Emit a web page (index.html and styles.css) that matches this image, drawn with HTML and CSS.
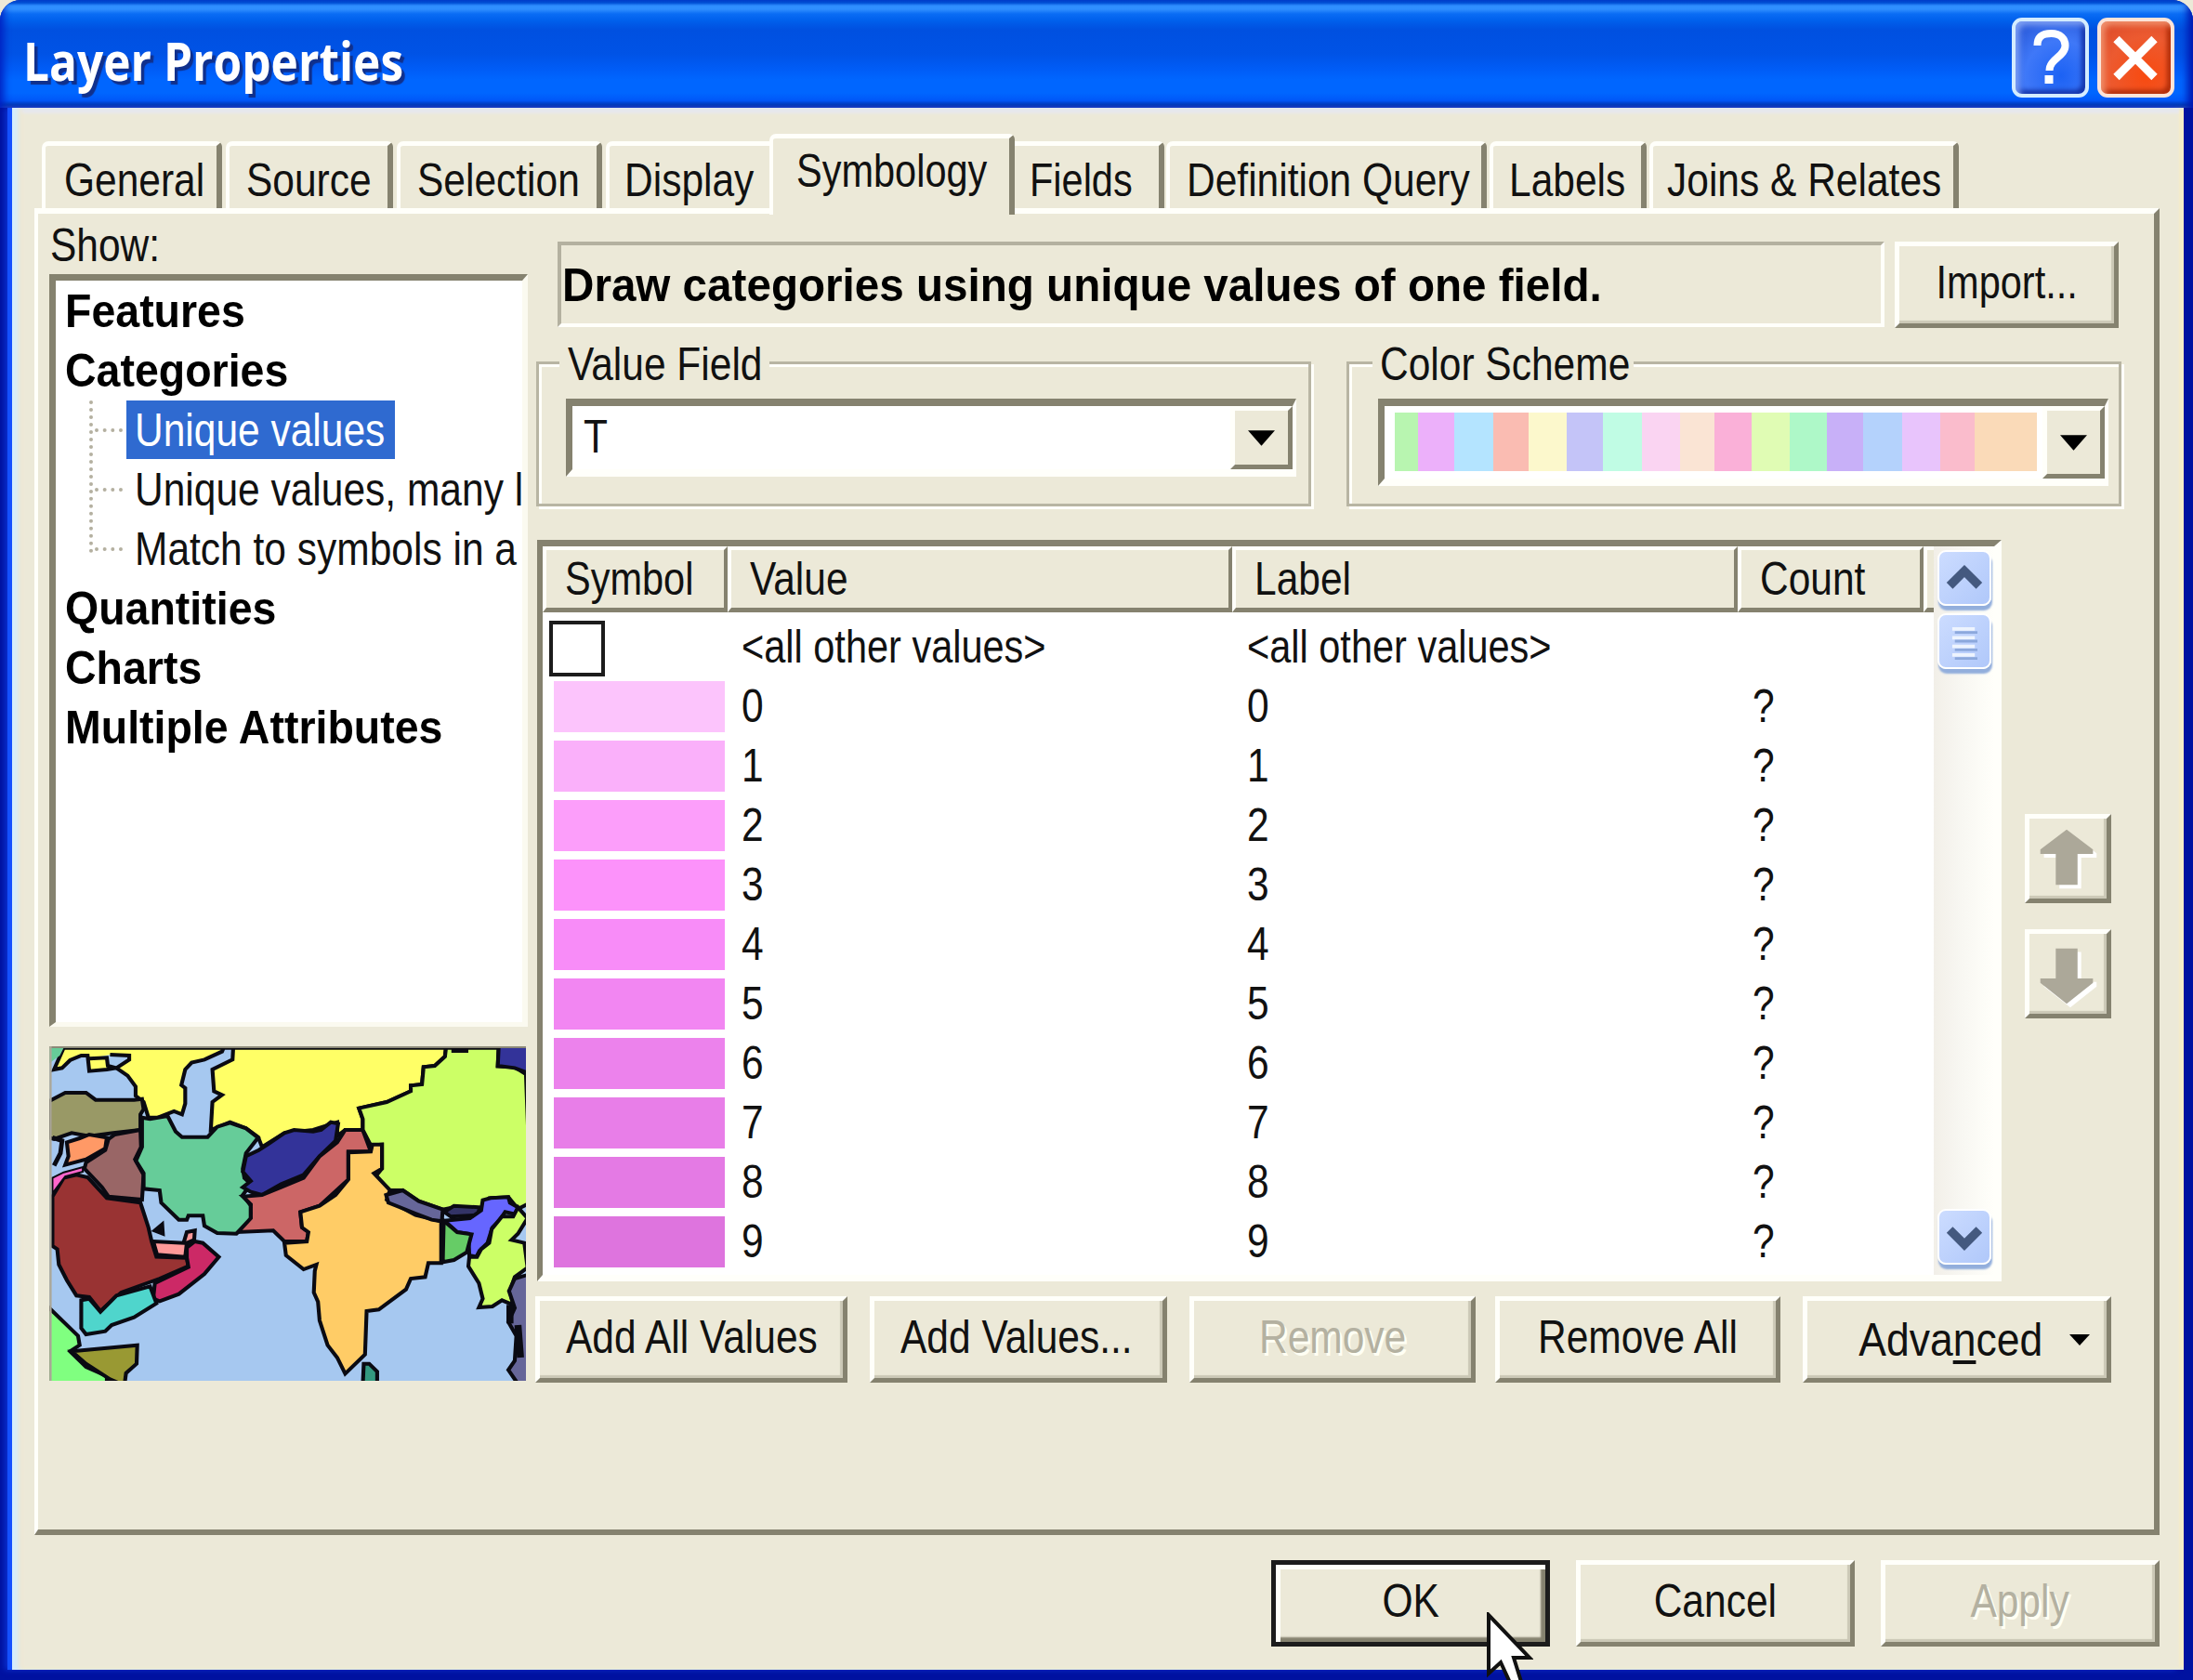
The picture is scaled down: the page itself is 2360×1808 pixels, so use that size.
FILE: index.html
```html
<!DOCTYPE html>
<html lang="en">
<head>
<meta charset="utf-8">
<title>Layer Properties</title>
<link rel="stylesheet" href="styles.css">
</head>
<body>
<div class="window">
  <header class="titlebar">
    <h1 class="title">Layer Properties</h1>
    <div class="caption-buttons">
      <button class="caption help" aria-label="Help">
        <svg viewBox="0 0 82 86"><path d="M27 30C27 20 33 17 42 17c10 0 15 6 15 13 0 12-17 14-17 27" fill="none" stroke="#fff" stroke-width="8"/><rect x="35" y="62" width="9" height="9" fill="#fff"/></svg>
      </button>
      <button class="caption close" aria-label="Close">
        <svg viewBox="0 0 82 86"><path d="M20 23L61 64M61 23L20 64" fill="none" stroke="#fff" stroke-width="9"/></svg>
      </button>
    </div>
  </header>

  <main class="body">
    <nav class="tabs">
      <div class="tab general"><span class="t">General</span></div>
      <div class="tab source"><span class="t">Source</span></div>
      <div class="tab selection"><span class="t">Selection</span></div>
      <div class="tab display"><span class="t">Display</span></div>
      <div class="tab symbology active"><span class="t narrow">Symbology</span></div>
      <div class="tab fields"><span class="t narrow">Fields</span></div>
      <div class="tab query"><span class="t">Definition Query</span></div>
      <div class="tab labels"><span class="t">Labels</span></div>
      <div class="tab joins"><span class="t">Joins &amp; Relates</span></div>
    </nav>

    <section class="panel">
      <aside class="side">
        <div class="show"><span class="t">Show:</span></div>
        <div class="tree">
          <div class="node"><span class="t bold">Features</span></div>
          <div class="node"><span class="t bold">Categories</span></div>
          <div class="branch">
            <div class="leaf"><i class="dots"></i><span class="pick"><span class="t">Unique values</span></span></div>
            <div class="leaf"><i class="dots"></i><span class="t">Unique values, many l</span></div>
            <div class="leaf"><i class="dots"></i><span class="t">Match to symbols in a</span></div>
          </div>
          <div class="node"><span class="t bold">Quantities</span></div>
          <div class="node"><span class="t bold">Charts</span></div>
          <div class="node"><span class="t bold">Multiple Attributes</span></div>
        </div>
        <svg class="map" viewBox="35 55 1490 1080" preserveAspectRatio="none">
          <rect x="35" y="55" width="1490" height="1080" fill="#a6c8f0"/>
          <g stroke="#0a0a12" stroke-width="12" stroke-linejoin="miter">
            <path fill="#ffff66" d="M80 60L50 130L75 125L100 100L135 85L155 85L160 135L215 130L245 125L280 150L305 185L305 215L330 235L345 285L375 285L425 265L450 275L460 240L460 190L448 180L460 130L480 108L520 98L575 72L580 60L610 60L608 98L545 130L550 200L575 212L545 235L540 325L600 300L650 320L688 348L700 380L770 335L860 325L935 300L935 345L960 325L1015 325L1015 290L1003 255L1090 235L1165 200L1165 182L1200 178L1205 122L1240 118L1272 88L1275 60Z"/>
            <path fill="#a6c8f0" d="M160 95L215 92L218 118L245 125L285 98L285 85L225 82"/>
            <path fill="#66cc99" d="M35 60L80 60L68 85L35 110Z" stroke="none"/>
            <path fill="#999966" d="M35 232L85 205L150 205L180 228L300 228L325 225L330 258L320 275L320 325L235 335L160 345L105 335L50 355L35 350Z"/>
            <path fill="#ff9966" d="M90 365L130 352L160 340L215 350L210 385L150 420L85 438L95 410Z"/>
            <path fill="#996666" d="M220 355L240 340L320 325L322 380L303 420L330 470L325 550L220 540L200 510L145 450L150 430L210 390Z"/>
            <path fill="#66cc99" d="M325 285L350 290L405 280L430 330L450 348L530 348L560 315L600 302L650 320L688 350L650 400L640 450L645 480L665 500L640 535L665 570L665 615L620 660L560 658L520 635L515 602L470 602L465 615L440 615L385 560L380 520L330 515L330 465L306 425L325 380Z"/>
            <path fill="#333399" d="M650 410L690 390L720 370L770 335L800 325L860 330L885 325L915 300L938 305L930 360L880 410L830 470L760 500L700 535L665 525L640 510L665 490L640 460Z"/>
            <path fill="#cc6666" d="M640 540L700 535L760 510L830 480L880 410L935 365L960 325L1015 325L1040 395L970 395L970 485L880 570L820 590L825 640L845 655L840 685L770 685L735 650L625 655L665 610L665 565Z"/>
            <path fill="#ccff66" d="M1275 60L1440 60L1437 120L1490 122L1525 145L1540 560L1500 580L1470 542L1410 545L1385 580L1300 575L1265 582L1190 555L1140 520L1100 520L1055 475L1075 450L1075 372L1040 375L1015 325L1015 290L1003 255L1090 235L1165 200L1165 182L1200 178L1205 122L1240 118L1272 88Z"/>
            <path fill="#333399" d="M1440 50L1540 50L1540 145L1490 125L1437 118Z"/>
            <path d="M1292 70H1345" stroke-width="12"/>
            <path fill="#ffcc66" d="M970 398L1040 395L1045 372L1075 372L1075 450L1050 465L1100 520L1090 550L1180 600L1260 620L1260 755L1220 755L1210 800L1165 805L1150 840L1065 905L1027 910L1022 1050L960 1112L935 1060L905 1020L880 940L875 880L862 850L865 780L870 760L830 775L775 730L770 690L840 685L845 655L825 640L820 590L880 570L930 535L970 485Z"/>
            <path fill="#666699" d="M1088 535L1140 520L1190 555L1265 582L1262 620L1230 615L1180 595L1095 560Z"/>
            <path fill="#333366" d="M1270 590L1300 570L1380 575L1375 600L1290 605Z"/>
            <path fill="#6666ff" d="M1270 618L1350 610L1385 585L1390 552L1415 545L1470 542L1475 560L1500 575L1505 600L1460 590L1440 620L1420 640L1405 690L1380 715L1370 735L1348 730L1345 660L1310 655Z"/>
            <path fill="#66cc66" d="M1268 618L1310 655L1355 662L1340 720L1300 745L1265 752Z"/>
            <path fill="#ccff66" d="M1348 735L1372 735L1385 710L1410 690L1418 645L1450 605L1485 605L1500 575L1530 610L1500 660L1480 680L1520 690L1530 770L1490 800L1475 845L1485 890L1450 875L1420 895L1378 898L1390 870L1378 820L1345 765Z"/>
            <path fill="#666699" d="M1540 790L1490 805L1472 845L1490 900L1470 945L1495 990L1490 1070L1470 1100L1500 1145L1540 1145Z"/>
            <path d="M1500 955L1508 1060M1475 890L1475 950" stroke-width="22" fill="none"/>
            <path fill="#993333" d="M45 540L80 480L120 470L155 478L215 545L320 560L345 640L355 685L370 735L465 738L470 765L380 805L260 850L195 910L160 865L120 860L90 810L65 760L60 710L45 700Z"/>
            <path fill="#ff66cc" d="M45 480L80 462L140 445L140 460L85 475L45 530Z" stroke-width="6"/>
            <path d="M45 350L75 360L70 400L50 440" fill="none" stroke-width="14"/>
            <path fill="#ff9999" d="M360 685L455 690L465 655L490 650L488 680L465 690L460 735L372 728Z"/>
            <path fill="#cc2966" d="M465 738L465 705L490 685L515 690L565 735L520 790L440 855L380 878L360 870L365 820L470 768Z"/>
            <path fill="#4fd5cc" d="M135 875L160 870L195 912L245 860L350 830L370 885L300 930L230 955L210 975L150 985L135 965Z"/>
            <path fill="#80ff80" d="M30 895L125 990L130 1020L100 1040L150 1090L215 1120L215 1150L30 1150Z"/>
            <path fill="#999933" d="M105 1040L310 1020L308 1080L275 1110L270 1150L225 1130L150 1080Z"/>
            <path fill="#339980" d="M1015 1150L1018 1080L1035 1080L1060 1105L1060 1150Z"/>
            <path d="M365 650L388 630L390 660Z" fill="#0a0a12"/>
          </g>
          <path d="M35 57H1525" stroke="#8c8978" stroke-width="8"/>
          <path d="M39 55V1135" stroke="#aca899" stroke-width="7"/>
        </svg>
      </aside>

      <div class="main">
        <div class="message-row">
          <div class="message"><span class="t bold long">Draw categories using unique values of one field.</span></div>
          <button class="btn import"><span class="t narrow">Import...</span></button>
        </div>

        <div class="groups">
          <div class="group value-field">
            <div class="legend"><span class="t">Value Field</span></div>
            <div class="combo">
              <span class="t">T</span>
              <span class="drop"><svg viewBox="0 0 30 17"><path d="M0 0H30L15 17Z"/></svg></span>
            </div>
          </div>
          <div class="group color-scheme">
            <div class="legend"><span class="t">Color Scheme</span></div>
            <div class="combo">
              <span class="ramp"></span>
              <span class="drop"><svg viewBox="0 0 30 17"><path d="M0 0H30L15 17Z"/></svg></span>
            </div>
          </div>
        </div>

        <div class="list-row">
          <div class="list">
            <div class="table">
              <div class="row head">
                <div><span class="t narrow">Symbol</span></div><div><span class="t">Value</span></div><div><span class="t">Label</span></div><div><span class="t">Count</span></div><div></div>
              </div>
              <div class="row"><i class="check"></i><span class="t narrow">&lt;all other values&gt;</span><span class="t narrow">&lt;all other values&gt;</span></div>
              <div class="row"><i class="swatch" style="background:#fcc4fc"></i><span class="t">0</span><span class="t">0</span><span class="t">?</span></div>
              <div class="row"><i class="swatch" style="background:#fab0fa"></i><span class="t">1</span><span class="t">1</span><span class="t">?</span></div>
              <div class="row"><i class="swatch" style="background:#fc9efa"></i><span class="t">2</span><span class="t">2</span><span class="t">?</span></div>
              <div class="row"><i class="swatch" style="background:#fc92fa"></i><span class="t">3</span><span class="t">3</span><span class="t">?</span></div>
              <div class="row"><i class="swatch" style="background:#f88cf8"></i><span class="t">4</span><span class="t">4</span><span class="t">?</span></div>
              <div class="row"><i class="swatch" style="background:#f286f2"></i><span class="t">5</span><span class="t">5</span><span class="t">?</span></div>
              <div class="row"><i class="swatch" style="background:#ec82ec"></i><span class="t">6</span><span class="t">6</span><span class="t">?</span></div>
              <div class="row"><i class="swatch" style="background:#e87ee8"></i><span class="t">7</span><span class="t">7</span><span class="t">?</span></div>
              <div class="row"><i class="swatch" style="background:#e47ae4"></i><span class="t">8</span><span class="t">8</span><span class="t">?</span></div>
              <div class="row"><i class="swatch" style="background:#de74de"></i><span class="t">9</span><span class="t">9</span><span class="t">?</span></div>
            </div>
            <div class="scroll">
              <div class="knob"><svg viewBox="0 0 56 60"><path d="M11 39L28 22L45 39" fill="none" stroke="#44597f" stroke-width="10"/></svg></div>
              <div class="knob thumb"><svg viewBox="0 0 56 60"><path d="M14 16H40M14 26H40M14 36H40M14 46H40" stroke="#eef4fe" stroke-width="4"/><path d="M17 20H43M17 30H43M17 40H43M17 50H43" stroke="#8ca8dc" stroke-width="3"/></svg></div>
              <div class="knob down"><svg viewBox="0 0 56 60"><path d="M11 22L28 39L45 22" fill="none" stroke="#44597f" stroke-width="10"/></svg></div>
            </div>
          </div>
          <div class="movers">
            <button class="btn move" aria-label="Move up"><svg viewBox="0 0 85 88"><path d="M41 12L70 34V39H53V73H29V39H12V34Z" fill="#fff" transform="translate(4 4)"/><path d="M41 12L70 34V39H53V73H29V39H12V34Z" fill="#aca899"/></svg></button>
            <button class="btn move" aria-label="Move down"><svg viewBox="0 0 85 88"><path d="M41 77L70 54V49H53V16H29V49H12V54Z" fill="#fff" transform="translate(4 4)"/><path d="M41 77L70 54V49H53V16H29V49H12V54Z" fill="#aca899"/></svg></button>
          </div>
        </div>

        <div class="actions">
          <button class="btn add-all"><span class="t">Add All Values</span></button>
          <button class="btn add"><span class="t">Add Values...</span></button>
          <button class="btn remove disabled"><span class="t">Remove</span></button>
          <button class="btn remove-all"><span class="t">Remove All</span></button>
          <button class="btn advanced"><span class="t wide">Adva<u>n</u>ced</span><svg viewBox="0 0 22 12"><path d="M0 0H22L11 12Z"/></svg></button>
        </div>
      </div>
    </section>

    <footer class="footer">
      <button class="btn ok"><span class="t">OK</span></button>
      <button class="btn"><span class="t">Cancel</span></button>
      <button class="btn disabled"><span class="t">Apply</span></button>
    </footer>
  </main>
</div>
<svg class="cursor" viewBox="0 0 50 76"><path d="M2 3V66L15 54L26 78H38L29 49H46Z" fill="#fff" stroke="#111" stroke-width="4"/></svg>
</body>
</html>
```
FILE: styles.css
```css
* { box-sizing: border-box; }

body {
  margin: 0;
  width: 2360px;
  height: 1808px;
  overflow: hidden;
  background: #ece9d8;
  color: #111;
  font: 50px/64px "Liberation Sans", Arial, sans-serif;
}

button { font: inherit; color: inherit; padding: 0; }
svg { display: block; }
i { display: block; }

/* Condensed UI lettering */
.t {
  display: inline-block;
  white-space: pre;
  transform: scaleX(.85);
  transform-origin: left center;
}
.t.narrow { transform: scaleX(.83); }
.t.wide { transform: scaleX(.89); }
.t.bold { font-weight: 700; color: #000; transform: scaleX(.93); }
.t.long { transform: scaleX(.952); }

/* Window frame */
.window {
  width: 2360px;
  height: 1808px;
  display: flex;
  flex-direction: column;
  border-radius: 22px 22px 0 0;
  overflow: hidden;
  background: #0012a0;
}
.titlebar {
  flex: none;
  height: 116px;
  display: flex;
  justify-content: space-between;
  padding: 19px 20px 0 25px;
  background: linear-gradient(#0056d6 0, #0058da 3px, #2f90ff 6px, #2f8eff 10px, #0a6cf4 15px, #0060ec 22px, #0050e0 32px, #0053e6 58px, #005cf6 74px, #0066ff 86px, #0066ff 100px, #0058f8 108px, #0040b4 113px, #3a62b8 116px);
  box-shadow: inset 7px 0 8px -3px #0020c0, inset -9px 0 8px -3px #0018b0;
}
.title {
  margin: 0;
  font: 700 57px/92px "Open Sans", "Noto Sans", sans-serif;
  white-space: nowrap;
  color: #fff;
  text-shadow: 4px 4px 1px #10308c;
  transform: scaleX(.87);
  transform-origin: left center;
}
.caption-buttons { display: flex; gap: 9px; }
.caption {
  width: 83px;
  height: 86px;
  border: 4px solid #d4ecff;
  border-radius: 11px;
}
.caption svg { width: 83px; height: 86px; margin: -4px; }
.help {
  background: radial-gradient(circle at 65% 75%, #1c62f4, #3f78f8 50%, #2450d0 100%);
  box-shadow: inset 4px 4px 6px #7fa0f4, inset -4px -4px 5px #1232a8;
}
.close {
  border-color: #fce4d8;
  background: radial-gradient(circle at 65% 75%, #f84a10, #ec5a30 55%, #d84828 100%);
  box-shadow: inset 4px 4px 6px #f0906c, inset -4px -4px 5px #b02c08;
}

.body {
  flex: none;
  height: 1681px;
  margin: 0 10px 0 13px;
  padding: 36px 0 0 24px;
  background: #ece9d8;
  box-shadow: -5px 0 #1450ff, -8px 0 6px #0a30d0, inset 7px 0 5px #d4ecfc, inset 10px 0 4px #f2e6cc, inset -5px -3px 2px #f6ecc8, inset 0 6px 3px #e8e8ee;
}

/* Tabs */
.tabs {
  height: 72px;
  display: flex;
  align-items: flex-start;
  padding-left: 8px;
}
.tab {
  flex: none;
  height: 72px;
  line-height: 74px;
  border: solid;
  border-width: 5px 6px 0 4px;
  border-color: #fffffa #85826f transparent #fffffa;
  border-radius: 7px 6px 0 0;
  background: #ece9d8;
}
.tab.active {
  height: 87px;
  margin-top: -8px;
  line-height: 71px;
  z-index: 1;
}
.general { width: 194px; margin-right: 4px; padding-left: 20px; }
.source { width: 180px; margin-right: 4px; padding-left: 18px; }
.selection { width: 221px; margin-right: 4px; padding-left: 18px; }
.display { width: 176px; padding-left: 16px; border-right: 0; border-radius: 7px 0 0 0; }
.symbology { width: 264px; padding-left: 25px; }
.fields { width: 161px; margin-right: 2px; padding-left: 16px; border-left: 0; border-radius: 0 6px 0 0; }
.query { width: 345px; margin-right: 3px; padding-left: 18px; }
.labels { width: 169px; margin-right: 3px; padding-left: 17px; }
.joins { width: 333px; padding-left: 15px; }

/* Property page */
.panel {
  width: 2287px;
  height: 1428px;
  display: flex;
  padding: 25px 0 0 12px;
  border: solid;
  border-width: 6px 6px 6px 4px;
  border-color: #fffffa #85826f #85826f #fffffa;
}
.side { flex: none; width: 515px; margin-right: 9px; }
.show { height: 42px; padding-left: 1px; margin-top: -7px; margin-bottom: 5px; line-height: 21px; }
.show .t { line-height: 32px; }
.tree {
  height: 810px;
  margin-top: 2px;
  padding-top: 1px;
  border: solid;
  border-width: 7px 6px 5px 7px;
  border-color: #85826f #fbfaf0 #fbfaf0 #85826f;
  background: #fff;
}
.node { height: 64px; padding-left: 10px; }
.branch { position: relative; }
.branch::before {
  content: "";
  position: absolute;
  left: 36px;
  top: 0;
  height: 164px;
  border-left: 4px dotted #b4b0a0;
}
.leaf { height: 64px; display: flex; padding-left: 42px; }
.dots { flex: none; width: 30px; height: 34px; margin-right: 13px; border-bottom: 4px dotted #b4b0a0; }
.pick { width: 289px; height: 63px; margin-left: -9px; padding-left: 9px; background: #2f6ad0; color: #fff; }
.map { width: 513px; height: 360px; margin-top: 21px; }

.main { flex: none; width: 1710px; padding-top: 5px; }
.message-row { display: flex; gap: 11px; padding-left: 23px; }
.message {
  width: 1428px;
  height: 92px;
  padding-left: 1px;
  line-height: 86px;
  border: 4px solid;
  border-color: #b4b1a0 #fffffa #fffffa #b4b1a0;
}

.btn {
  flex: none;
  height: 93px;
  display: flex;
  justify-content: center;
  align-items: center;
  padding-bottom: 6px;
  border: solid;
  border-width: 5px;
  border-color: #fffffa #85826f #85826f #fffffa;
  background: #ece9d8;
  box-shadow: inset -3px -3px 1px #cbc8b6;
}
.btn .t { transform-origin: center; }
.import { width: 241px; }
.disabled { color: #b4b1a1; text-shadow: 3px 3px #fffff4; }

/* Group boxes */
.groups { display: flex; gap: 38px; margin-top: 36px; }
.group {
  height: 156px;
  border: 3px solid #b8b5a3;
  box-shadow: inset 3px 3px #fffffa, 3px 3px #fffffa;
}
.value-field { width: 834px; padding-left: 27px; }
.color-scheme { width: 834px; padding-left: 31px; }
.legend {
  height: 50px;
  margin: -26px 0 0 -5px;
  padding-left: 9px;
  line-height: 52px;
  background: #ece9d8;
}
.value-field .legend { width: 226px; }
.color-scheme .legend { width: 281px; margin-left: -6px; padding-left: 8px; }
.combo {
  display: flex;
  justify-content: space-between;
  width: 786px;
  height: 84px;
  margin-top: 13px;
  padding-left: 12px;
  border: solid;
  border-width: 8px 4px 8px 7px;
  border-color: #85826f #fffffa #fffffa #85826f;
  background: #fff;
}
.combo .t { line-height: 66px; }
.value-field .combo { margin-left: 2px; }
.color-scheme .combo { height: 94px; }
.ramp {
  width: 691px;
  height: 63px;
  margin: 7px 0 0 -1px;
  background: linear-gradient(90deg,
    #b8f5b0 0 25px, #ecb0fa 25px 64px, #b4e4ff 64px 106px, #fabcb2 106px 144px,
    #fcf8cc 144px 185px, #c4c4f8 185px 224px, #c0fce4 224px 266px, #fad4f2 266px 307px,
    #fae4d4 307px 344px, #fab0d8 344px 384px, #e0fcb4 384px 425px, #aef8c8 425px 465px,
    #c8b0f8 465px 504px, #b4d2fc 504px 546px, #e8c4fc 546px 587px, #fabccc 587px 624px, #fadab8 624px);
}
.drop {
  width: 67px;
  height: 68px;
  display: flex;
  align-items: center;
  justify-content: center;
  border: solid;
  border-width: 5px;
  border-color: #fffffa #85826f #85826f #fffffa;
  background: #ece9d8;
}
.color-scheme .drop { height: 78px; }
.drop svg { width: 29px; height: 17px; }

/* Value list */
.list-row { display: flex; gap: 25px; margin: 36px 0 0 1px; }
.list {
  width: 1576px;
  height: 798px;
  display: flex;
  border: solid;
  border-width: 7px 8px 7px 6px;
  border-color: #85826f #fffffa #fffffa #85826f;
  background: #fff;
}
.table { flex: none; width: 1497px; }
.row {
  height: 64px;
  display: grid;
  grid-template-columns: 214px 544px 544px auto;
  justify-items: start;
}
.row > .t { line-height: 67px; }
.head {
  grid-template-columns: 199px 543px 544px 200px auto;
  justify-items: stretch;
  height: 68px;
  margin-bottom: 7px;
}
.head div {
  padding-left: 20px;
  line-height: 62px;
  border: solid;
  border-width: 4px 4px 5px 4px;
  border-color: #fffffa #85826f #85826f #fffffa;
  background: #ece9d8;
}
.head .t { line-height: 62px; }
.head div:last-child { padding: 0; border-right: 0; }
.check { width: 60px; height: 60px; margin: 5px 0 0 7px; border: 4px solid #1c1c1c; }
.swatch { width: 184px; height: 55px; margin: 6px 0 0 12px; }

.scroll {
  flex: none;
  width: 65px;
  padding: 4px 0 0 4px;
  display: flex;
  flex-direction: column;
  gap: 8px;
  background: linear-gradient(90deg, #f2efe8, #f8f7f2 45%, #fffffa);
}
.knob {
  width: 58px;
  height: 60px;
  border-radius: 9px;
  border: 2px solid #fff;
  background: linear-gradient(135deg, #ccdcff, #b0c8fa);
  box-shadow: 1px 5px 2px #92aedc;
}
.knob svg { width: 54px; height: 56px; }
.down { margin: auto 0 11px; }

.movers { display: flex; flex-direction: column; gap: 28px; padding-top: 295px; }
.move { width: 93px; height: 96px; padding: 0; }
.move svg { width: 85px; height: 88px; }

.actions { display: flex; margin: 16px 0 0 -1px; }
.actions .btn { margin-right: 24px; }
.add-all { width: 336px; }
.add { width: 320px; }
.actions .add { padding-right: 4px; }
.remove { width: 308px; }
.actions .remove { margin-right: 21px; }
.remove-all { width: 307px; }
.advanced { width: 332px; padding: 0 0 0 25px; gap: 16px; }
.advanced svg { width: 22px; height: 12px; }
u { text-decoration-thickness: 4px; text-underline-offset: 5px; }

.footer { display: flex; gap: 28px; justify-content: flex-end; margin-top: 27px; padding-right: 26px; }
.footer .btn { width: 300px; }
.footer .ok {
  border-color: #1c1c1c;
  box-shadow: inset 5px 5px #fffffa, inset -5px -5px 2px #85826f;
}

.cursor {
  position: absolute;
  left: 1600px;
  top: 1735px;
  width: 50px;
  height: 76px;
}
```
